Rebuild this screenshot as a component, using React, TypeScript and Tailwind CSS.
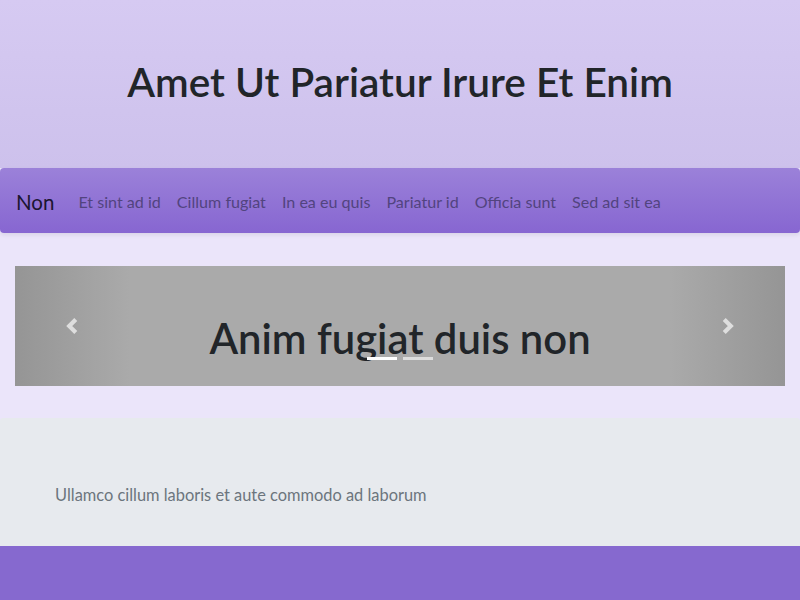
const navLinks = [
  "Et sint ad id",
  "Cillum fugiat",
  "In ea eu quis",
  "Pariatur id",
  "Officia sunt",
  "Sed ad sit ea",
];

function Chevron({ dir }: { dir: "left" | "right" }) {
  return (
    <svg viewBox="0 0 16 20" className="w-[15px] h-[20px]">
      <path
        d={dir === "left" ? "M11.5 3 L4.5 10 L11.5 17" : "M4.5 3 L11.5 10 L4.5 17"}
        fill="none"
        stroke="#dedede"
        strokeWidth="4.5"
        strokeLinejoin="miter"
      />
    </svg>
  );
}

export default function App() {
  return (
    <div className="min-h-[600px] w-full bg-[#ebe5fa] font-['Lato','Noto_Sans',sans-serif]">
      <header className="h-[168px] flex items-center justify-center bg-gradient-to-b from-[#d6caf2] to-[#cdc1ec]">
        <h1 className="text-[40.6px] font-semibold text-[#212529] leading-tight -mt-[4px]">
          Amet Ut Pariatur Irure Et Enim
        </h1>
      </header>

      <nav className="h-[65px] rounded-[4px] bg-gradient-to-b from-[#9b81d9] to-[#8766d1] shadow-[0_2px_4px_rgba(0,0,0,0.08)] flex items-center px-4 pt-[3px]">
        <span className="text-[20.5px] text-[#1b1530] mr-4">Non</span>
        <ul className="flex items-center">
          {navLinks.map((l) => (
            <li key={l} className="px-2 text-[16.1px] text-[#52447f]">
              {l}
            </li>
          ))}
        </ul>
      </nav>

      <section className="px-[15px] pt-[33px] pb-[32px]">
        <div className="relative h-[120px] bg-[#aaaaaa] flex items-center justify-center overflow-hidden">
          <div className="absolute left-0 top-0 bottom-0 w-[115px] flex items-center justify-center bg-gradient-to-r from-[#959595] to-[#aaaaaa]">
            <Chevron dir="left" />
          </div>
          <h2 className="text-[41.8px] font-semibold text-[#212529] leading-none pt-[26px]">
            Anim fugiat duis non
          </h2>
          <div className="absolute right-0 top-0 bottom-0 w-[115px] flex items-center justify-center bg-gradient-to-l from-[#959595] to-[#aaaaaa]">
            <Chevron dir="right" />
          </div>
          <div className="absolute left-0 right-0 top-[91px] flex justify-center gap-[6px]">
            <span className="w-[30px] h-[3px] bg-white" />
            <span className="w-[30px] h-[3px] bg-white/60" />
          </div>
        </div>
      </section>

      <section className="h-[128px] bg-[#e7eaee] rounded-t-[3px] flex items-center px-[55px] pt-[26px]">
        <p className="text-[16.4px] text-[#6c757d]">
          Ullamco cillum laboris et aute commodo ad laborum
        </p>
      </section>

      <div className="h-[54px] bg-[#8669cf]" />
    </div>
  );
}
